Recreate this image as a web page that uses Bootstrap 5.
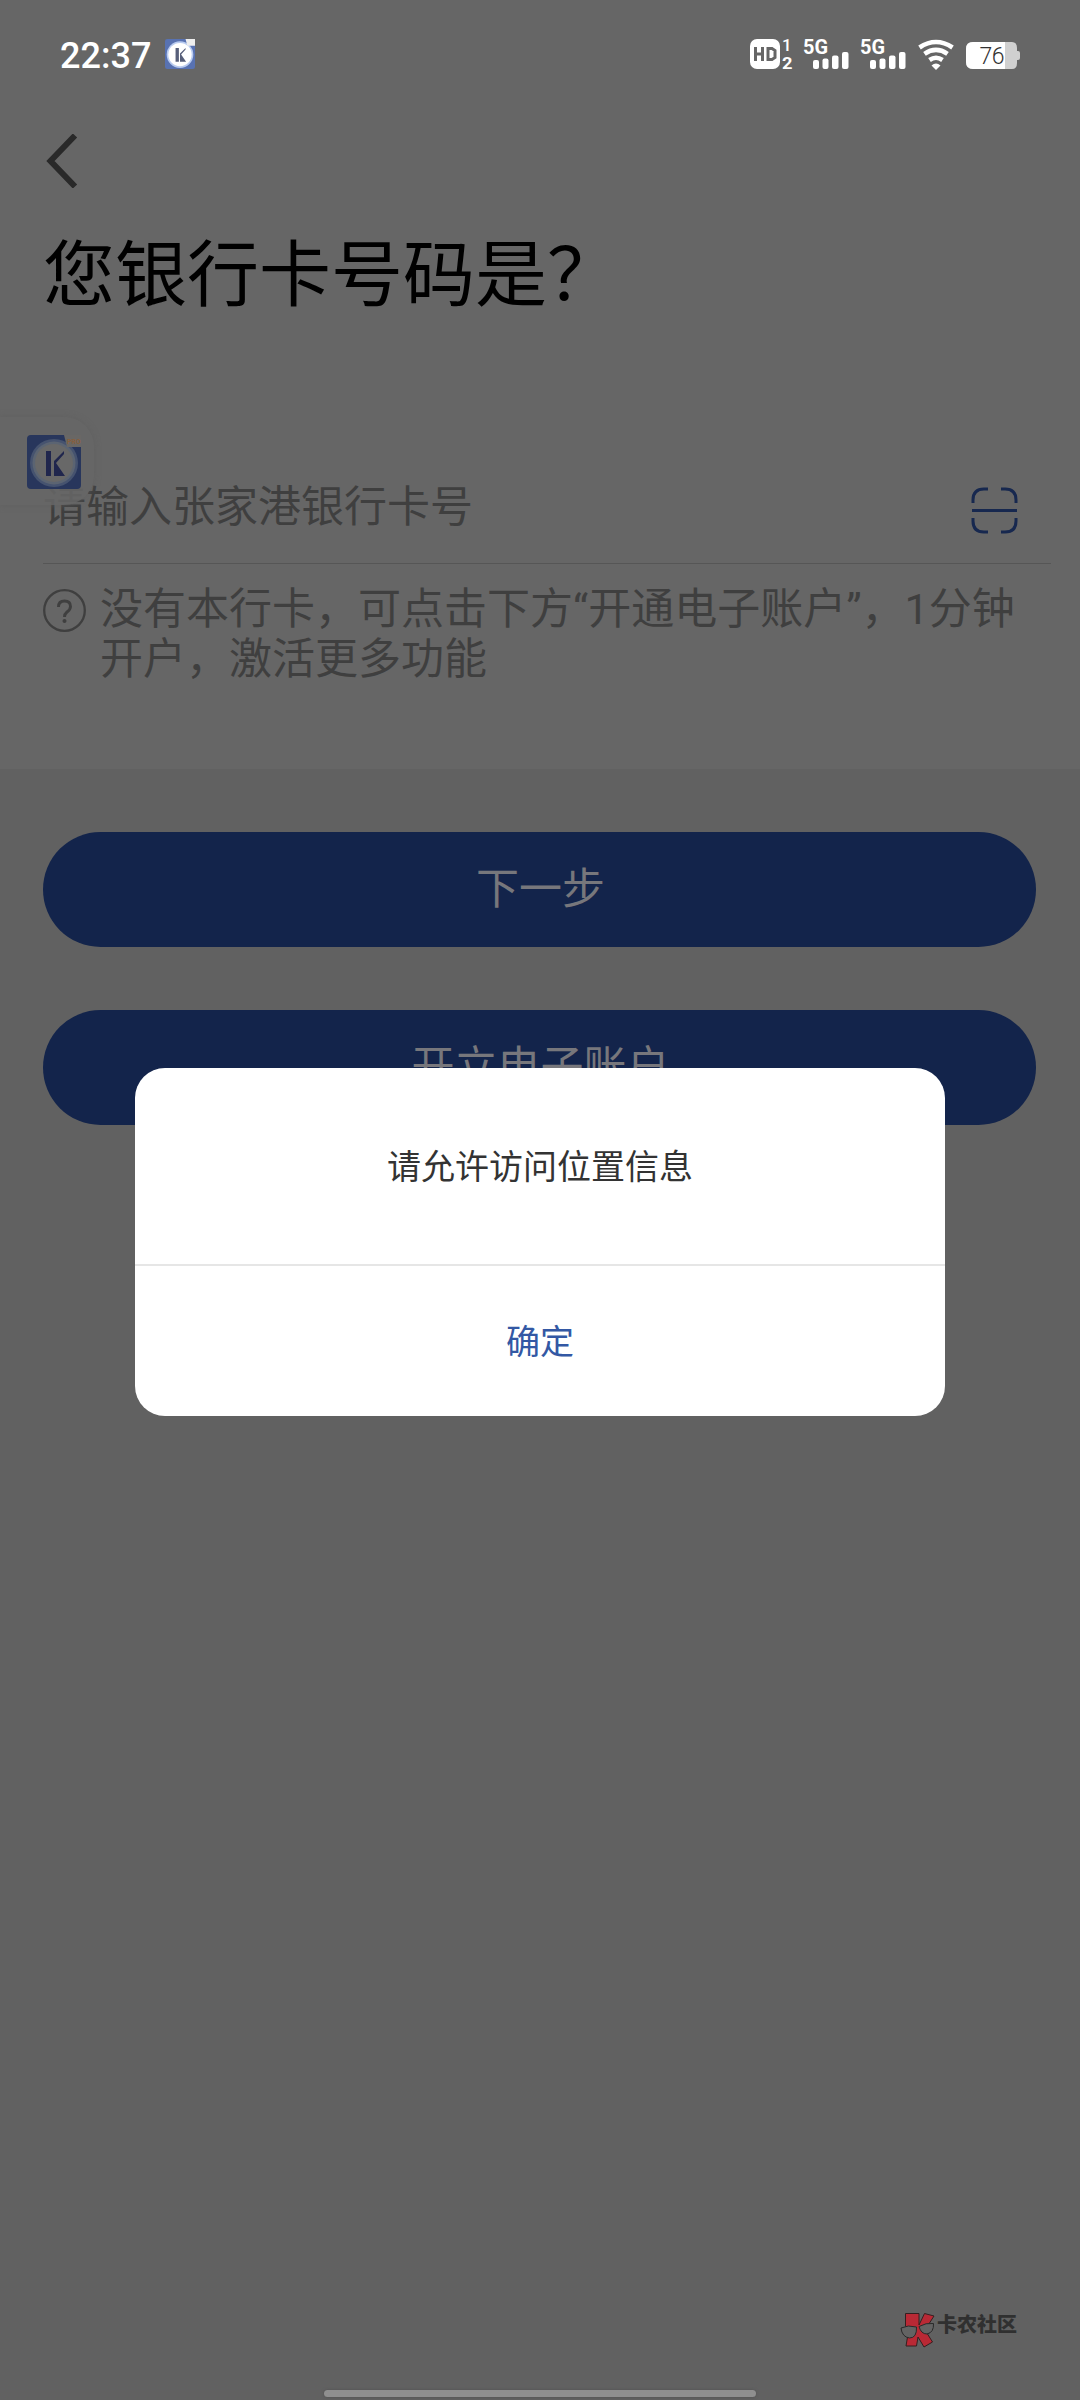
<!DOCTYPE html>
<html lang="zh-CN">
<head>
<meta charset="utf-8">
<meta name="viewport" content="width=device-width, initial-scale=1">
<title>银行卡号</title>
<link href="https://cdn.jsdelivr.net/npm/bootstrap@5.3.0/dist/css/bootstrap.min.css" rel="stylesheet">
<style>
body{font-family:Roboto,"Noto Sans CJK SC",sans-serif;background:#616161;color:#000}
.phone{width:1080px;height:2400px;background:#616161}
.sheet{height:769px;background:#666}
.statusbar{height:108px;padding:0 60px 0 60px}
.clock{font-size:36px;font-weight:500;line-height:1;width:105px;padding-top:3px;color:#fff}
.backrow{height:105px;padding:26px 0 0 44px}
.headline{font-size:72px;line-height:108px;padding-left:43px;font-weight:400;margin:9px 0 0}
.cardfield{margin:122px 29px 0 43px;height:112px;border-bottom:1px solid #565656;padding-right:33px}
.ph{font-size:43px;line-height:60px;color:#3f3f3f;padding-bottom:2px}
.scan{margin-top:6px}
.hint{margin:20px 0 0 43px;gap:14px;font-size:43px;line-height:50px;color:#3f3f3f}
.qmark{margin-top:5px}
.actions{padding:63px 44px 0 43px;gap:63px}
.pill{height:115px;border-radius:58px;background:#13244b;color:#77777c;font-size:43px;line-height:1;border:0;padding:0 0 0 2px}
.floater{left:0;top:417px;width:94px;height:88px;border-radius:0 30px 30px 0;background:rgba(103,103,103,.88);box-shadow:0 0 6px rgba(94,94,94,.7);padding:18px 0 0 27px}
.dialogbox{left:135px;top:1068px;width:810px;height:348px;border-radius:30px;background:#fff}
.msg{height:198px;font-size:34px;color:#333;border-bottom:2px solid #e6e6e6;padding-top:3px}
.ok{font-size:34px;color:#3358a4;padding-top:3px}
.wmark{left:900px;top:2310px;color:#303030;font-size:20px;font-weight:900;line-height:1}
.wtext{padding-top:5px}
.homebar{left:324px;top:2390px;width:432px;height:7px;border-radius:4px;background:#8f8f8f;box-shadow:0 0 3px #505050}
svg{display:block;flex:none}
</style>
</head>
<body>
<main class="phone position-relative overflow-hidden">
<section class="sheet">
<header class="statusbar d-flex align-items-center">
<span class="clock">22:37</span>
<svg width="30" height="30" viewBox="0 0 54 54"><rect width="54" height="54" rx="4" fill="#5872b2"/><circle cx="27" cy="28" r="24" fill="#b9cbf0"/><circle cx="27" cy="28" r="21" fill="#fff"/><path d="M19 16h6v25h-6zM27 26l10-10v3L29 28l9 13h-11z" fill="#575f7a"/><path d="M37 0h17v12H40z" fill="#eee"/></svg>
<svg class="ms-auto" width="270" height="54" viewBox="750 27 270 54" fill="#fff"><rect x="750" y="39" width="30" height="30" rx="7"/><path d="M755.500 47v14M762.500 47v14M755.500 54h7M768 48.500h4l3 2v7l-3 2h-4z" fill="none" stroke="#666" stroke-width="3"/><text x="782" y="51" font-size="17" font-weight="500">1</text><text x="782" y="68.500" font-size="17" font-weight="700" textLength="10.500" lengthAdjust="spacingAndGlyphs">2</text><text x="803" y="53.500" font-size="20.500" font-weight="700" textLength="25" lengthAdjust="spacingAndGlyphs">5G</text><text x="860" y="53.500" font-size="20.500" font-weight="700" textLength="25" lengthAdjust="spacingAndGlyphs">5G</text><rect x="813" y="60" width="6" height="9" rx="2"/><rect x="822.500" y="58.500" width="6" height="10.500" rx="2"/><rect x="832" y="55.500" width="6.500" height="13.500" rx="2"/><rect x="842" y="52" width="6.500" height="17" rx="2"/><rect x="870" y="60" width="6" height="9" rx="2"/><rect x="879.500" y="58.500" width="6" height="10.500" rx="2"/><rect x="889" y="55.500" width="6.500" height="13.500" rx="2"/><rect x="899" y="52" width="6.500" height="17" rx="2"/><path d="M919.500 47.500Q936 36.500 952.500 47.500M924.500 53.800Q936 46 947.500 53.800M929.500 60Q936 55.500 942.500 60" fill="none" stroke="#fff" stroke-width="4.600"/><path d="M931.500 65.500q4.500-4 9 0l-4.500 4.500z"/><path d="M973 42h39q5 0 5 6v3h1q2 0 2 2v5q0 2-2 2h-1v3q0 6-5 6h-39q-7 0-7-7V49q0-7 7-7z" fill="#d0d0d0"/><path d="M973 42h32v27h-32q-7 0-7-7V49q0-7 7-7z"/><text x="979.500" y="64" font-size="23" font-weight="300" fill="#333" textLength="25">76</text></svg>
</header>
<div class="backrow"><svg width="40" height="54" viewBox="0 0 40 54"><path d="M31 1.500 6.500 27 31 52.500" fill="none" stroke="#292929" stroke-width="6"/></svg></div>
<h1 class="headline">您银行卡号码是？</h1>
<div class="cardfield d-flex align-items-center justify-content-between"><span class="ph">请输入张家港银行卡号</span>
<svg class="scan" width="47" height="47" viewBox="0 0 47 47" fill="none" stroke="#17284f" stroke-width="3"><path d="M2 16v-3Q2 2 13 2h4M30 2h4q11 0 11 11v3M2 31v3q0 11 11 11h4M30 45h4q11 0 11-11v-3M1 23.500h45"/></svg></div>
<div class="hint d-flex"><svg class="qmark" width="43" height="43" viewBox="0 0 43 43" fill="none" stroke="#3f3f3f"><circle cx="21.500" cy="21.500" r="20.300" stroke-width="2.300"/><path d="M15.500 18q0-6 6-6t6 5.500q0 3-3.500 5.500-2.500 2-2.500 5" stroke-width="2.900"/><circle cx="21.500" cy="32" r="2" fill="#3f3f3f" stroke="none"/></svg><div>没有本行卡，可点击下方“开通电子账户”，1分钟<br>开户，激活更多功能</div></div>
</section>
<section class="actions d-flex flex-column"><button class="btn pill">下一步</button><button class="btn pill">开立电子账户</button></section>
<div class="floater position-absolute"><svg width="54" height="54" viewBox="0 0 54 54"><rect width="54" height="54" rx="4" fill="#28365c"/><circle cx="27" cy="28" r="24" fill="#46536f"/><circle cx="27" cy="28" r="21.500" fill="#5b6472"/><circle cx="27" cy="28" r="19" fill="#686868"/><path d="M19 16h5v25h-5zM27 26l10-10v3L29 28l9 13h-11z" fill="#20264d"/><path d="M37 0h17v12H40z" fill="#696765"/><text x="40" y="8.500" font-size="7" font-weight="700" fill="#875f3d">PRO</text></svg></div>
<div class="dialogbox position-absolute d-flex flex-column overflow-hidden"><div class="msg d-flex align-items-center justify-content-center">请允许访问位置信息</div><div class="ok flex-grow-1 d-flex align-items-center justify-content-center">确定</div></div>
<div class="wmark position-absolute d-flex"><svg width="37" height="38" viewBox="0 0 37 38"><path d="M5.500 3.500H19V15L24.500 3.500 34 6 25 20l7.500 12-8.500 5-6-10-1.500 9H6L8 24 5.500 20z" fill="#b92935" stroke="#351f20" stroke-linejoin="round"/><path d="M1 18q7-3.500 15.500-1 .5 11-7 11Q2 27 1 18zM19 16.500q7-4 14.500-3 .5 9-6.500 10.500-6 0-8-7.500z" fill="#636363" stroke="#292929"/></svg><span class="wtext">卡农社区</span></div>
<div class="homebar position-absolute"></div>
</main>
<script src="https://cdn.jsdelivr.net/npm/bootstrap@5.3.0/dist/js/bootstrap.bundle.min.js"></script>
</body>
</html>
